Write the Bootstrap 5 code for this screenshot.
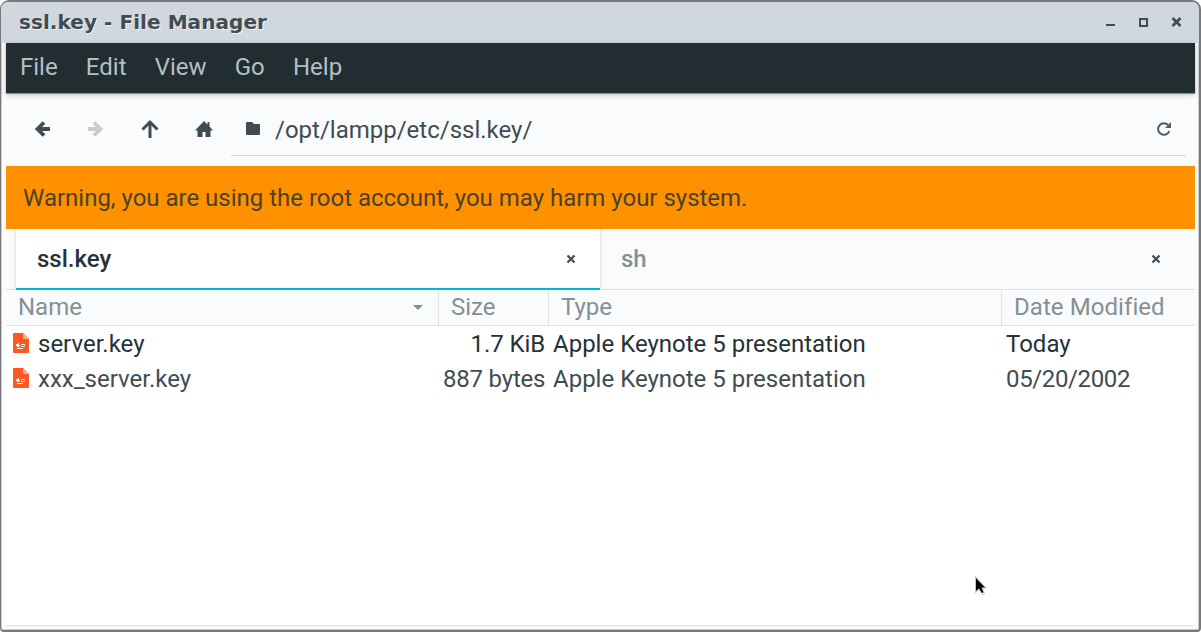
<!DOCTYPE html>
<html lang="en">
<head>
<meta charset="utf-8">
<meta name="viewport" content="width=device-width, initial-scale=1">
<title>ssl.key - File Manager</title>
<link href="https://cdn.jsdelivr.net/npm/bootstrap@5.3.0/dist/css/bootstrap.min.css" rel="stylesheet">
<style>
body{background:#fff;font-family:Roboto,sans-serif;font-size:24px;line-height:36px;color:#414c52;white-space:nowrap}
svg{display:block;flex:none}
.window{height:632px;border:2px solid #77797b;border-width:2px 2px 2px 1px;border-radius:9px 9px 4px 4px;background:#fafbfd;box-shadow:inset 0 0 0 1px #c9cbcd}
.titlebar{height:41px;background:#d0d7df;border-radius:7px 7px 0 0;font:bold 20px/41px "DejaVu Sans",sans-serif;letter-spacing:.06px;padding-left:18px;padding-right:16px;text-shadow:1px 1px #eef1f4}
.inner{margin:0 4px 0 5px;height:587px}
.menus{height:50px;background:#222d32;color:#b4bfc5;padding-left:14px;line-height:48px;gap:28.2px;position:relative;box-shadow:0 1px 1px #0005,0 2px 6px #0003}
.tools{height:73px}
.path-entry{margin-left:17px;margin-right:9px;height:63px;border-bottom:1px solid #d5d8da;padding:0 15px}
.warn{height:63px;background:#ff9100;color:#4b4227;padding-left:17px;line-height:65px;letter-spacing:-.01px}
.tabs{height:61px;padding-left:10px;border-bottom:1px solid #dfe1e3}
.tab-item{width:585px;height:61px;padding:0 25px 2px 21px;color:#849096;font-weight:500}
.tab-item.active{width:584px;background:#fff;color:#263238;padding:0 24px 0 21px;border-bottom:2px solid #00b8d4;box-shadow:0 0 3px #0003;clip-path:inset(0 -4px 0 -4px)}
.cols{display:grid;grid-template-columns:433px 110px 453px 1fr}
.heads{height:36px;color:#849096;border-bottom:1px solid #dfe1e3;line-height:34px}
.heads>div{padding-left:12px;border-right:1px solid #dfe1e3}
.heads>div:last-child{border:0;letter-spacing:.07px}
.files{height:300px;background:#fff;border-bottom:1px solid #dfe1e3;line-height:37px}
.files .cols{height:35px}
.files .cols>div{height:35px;padding-left:4px}
.files .cols>.entry{padding-left:7px;gap:9px}
.entry svg{margin-top:7px}
.files .cols>.size-cell{text-align:right;padding-right:4px}
.fresh{color:#263238}
.pointer{position:absolute;left:974px;top:575px}
</style>
</head>
<body>
<div class="window">
  <header class="titlebar d-flex justify-content-between">
    <span>ssl.key - File Manager</span>
    <svg width="78" height="41" fill="none" stroke="#414c52" stroke-width="2"><path d="M1 23h9M35 17h7v7h-7z"/><path stroke-width="2.600" d="M67.500 16l8 8M75.500 16l-8 8"/></svg>
  </header>
  <div class="inner d-flex flex-column">
    <nav class="menus d-flex"><span>File</span><span>Edit</span><span>View</span><span>Go</span><span>Help</span></nav>
    <div class="tools d-flex">
      <svg width="208" height="73"><g fill="none" stroke-width="3.800" stroke="#414c52"><path d="M44 36H32M38 29.500L31.500 36l6.500 6.500"/><path stroke="#c8cccf" d="M82 36h12M88 29.500l6.500 6.500-6.500 6.500"/><path stroke-width="3" d="M144 45V30M136.500 36.500L144 29l7.500 7.500"/></g><path fill="#414c52" d="M189 37.500L198 28l3.500 3.500V29h2v4.500l3.500 4h-2.500V44h-5v-5h-3v5h-5v-6.500z"/></svg>
      <div class="path-entry d-flex flex-grow-1 align-items-center">
        <svg width="14" height="13" fill="#414c52" style="margin-top:8px"><path d="M1 0h5l2 2h5q1 0 1 1v9q0 1-1 1H1q-1 0-1-1V1q0-1 1-1z"/></svg>
        <span style="margin:11px 0 0 15px">/opt/lampp/etc/ssl.key/</span>
        <svg class="ms-auto" width="14" height="14" style="margin-top:10px"><path d="M12.300 9.200A5.800 5.800 0 1 1 11.300 3.200" fill="none" stroke="#535c61" stroke-width="2"/><path fill="#535c61" d="M14 0v6H8z"/></svg>
      </div>
    </div>
    <div class="warn">Warning, you are using the root account, you may harm your system.</div>
    <div class="tabs d-flex">
      <div class="tab-item active d-flex align-items-center justify-content-between"><span>ssl.key</span><svg width="10" height="10" stroke="#414c52" stroke-width="2.200"><path d="M1.500 1.500l7 7M8.500 1.500l-7 7"/></svg></div>
      <div class="tab-item d-flex align-items-center justify-content-between"><span>sh</span><svg width="10" height="10" stroke="#414c52" stroke-width="2.200" style="margin-right:-1px"><path d="M1.500 1.500l7 7M8.500 1.500l-7 7"/></svg></div>
    </div>
    <div class="cols heads">
      <div class="d-flex justify-content-between"><span>Name</span><svg width="10" height="5" fill="#849096" style="margin:15px 15px 0 0"><path d="M0 0h10L5 5z"/></svg></div><div>Size</div><div>Type</div><div>Date Modified</div>
    </div>
    <div class="files">
      <div class="cols fresh">
        <div class="entry d-flex"><svg width="16" height="20"><path fill="#ff5722" d="M1 0h9l6 6v13q0 1-1 1H1q-1 0-1-1V1q0-1 1-1z"/><path fill="#ffab91" d="M10 0l6 6h-6z"/><path fill="#fff" d="M3 11h2v-1h1v2h1v1q-1 1-2 1t-2-1.500zM8 11h4v1H8zM8 13h4v1H8zM4 15h6v1H4z"/></svg><span>server.key</span></div>
        <div class="size-cell" style="letter-spacing:-.1px">1.7 KiB</div><div>Apple Keynote 5 presentation</div><div>Today</div>
      </div>
      <div class="cols">
        <div class="entry d-flex"><svg width="16" height="20"><path fill="#ff5722" d="M1 0h9l6 6v13q0 1-1 1H1q-1 0-1-1V1q0-1 1-1z"/><path fill="#ffab91" d="M10 0l6 6h-6z"/><path fill="#fff" d="M3 11h2v-1h1v2h1v1q-1 1-2 1t-2-1.500zM8 11h4v1H8zM8 13h4v1H8zM4 15h6v1H4z"/></svg><span>xxx_server.key</span></div>
        <div class="size-cell" style="letter-spacing:-.2px">887 bytes</div><div>Apple Keynote 5 presentation</div><div style="letter-spacing:-.36px">05/20/2002</div>
      </div>
    </div>
  </div>
</div>
<svg class="pointer" width="14" height="21"><path d="M1.500 1.500v16l3.500-3 3 5q1.500 1 2.500-.8L8 13h4z" fill="#fff" stroke="#aaa" stroke-width=".7"/><path d="M2 3v13l3-2.500 3 4.500 1.500-.5-2-5H11z" fill="#000"/></svg>
<script src="https://cdn.jsdelivr.net/npm/bootstrap@5.3.0/dist/js/bootstrap.bundle.min.js"></script>
</body>
</html>
